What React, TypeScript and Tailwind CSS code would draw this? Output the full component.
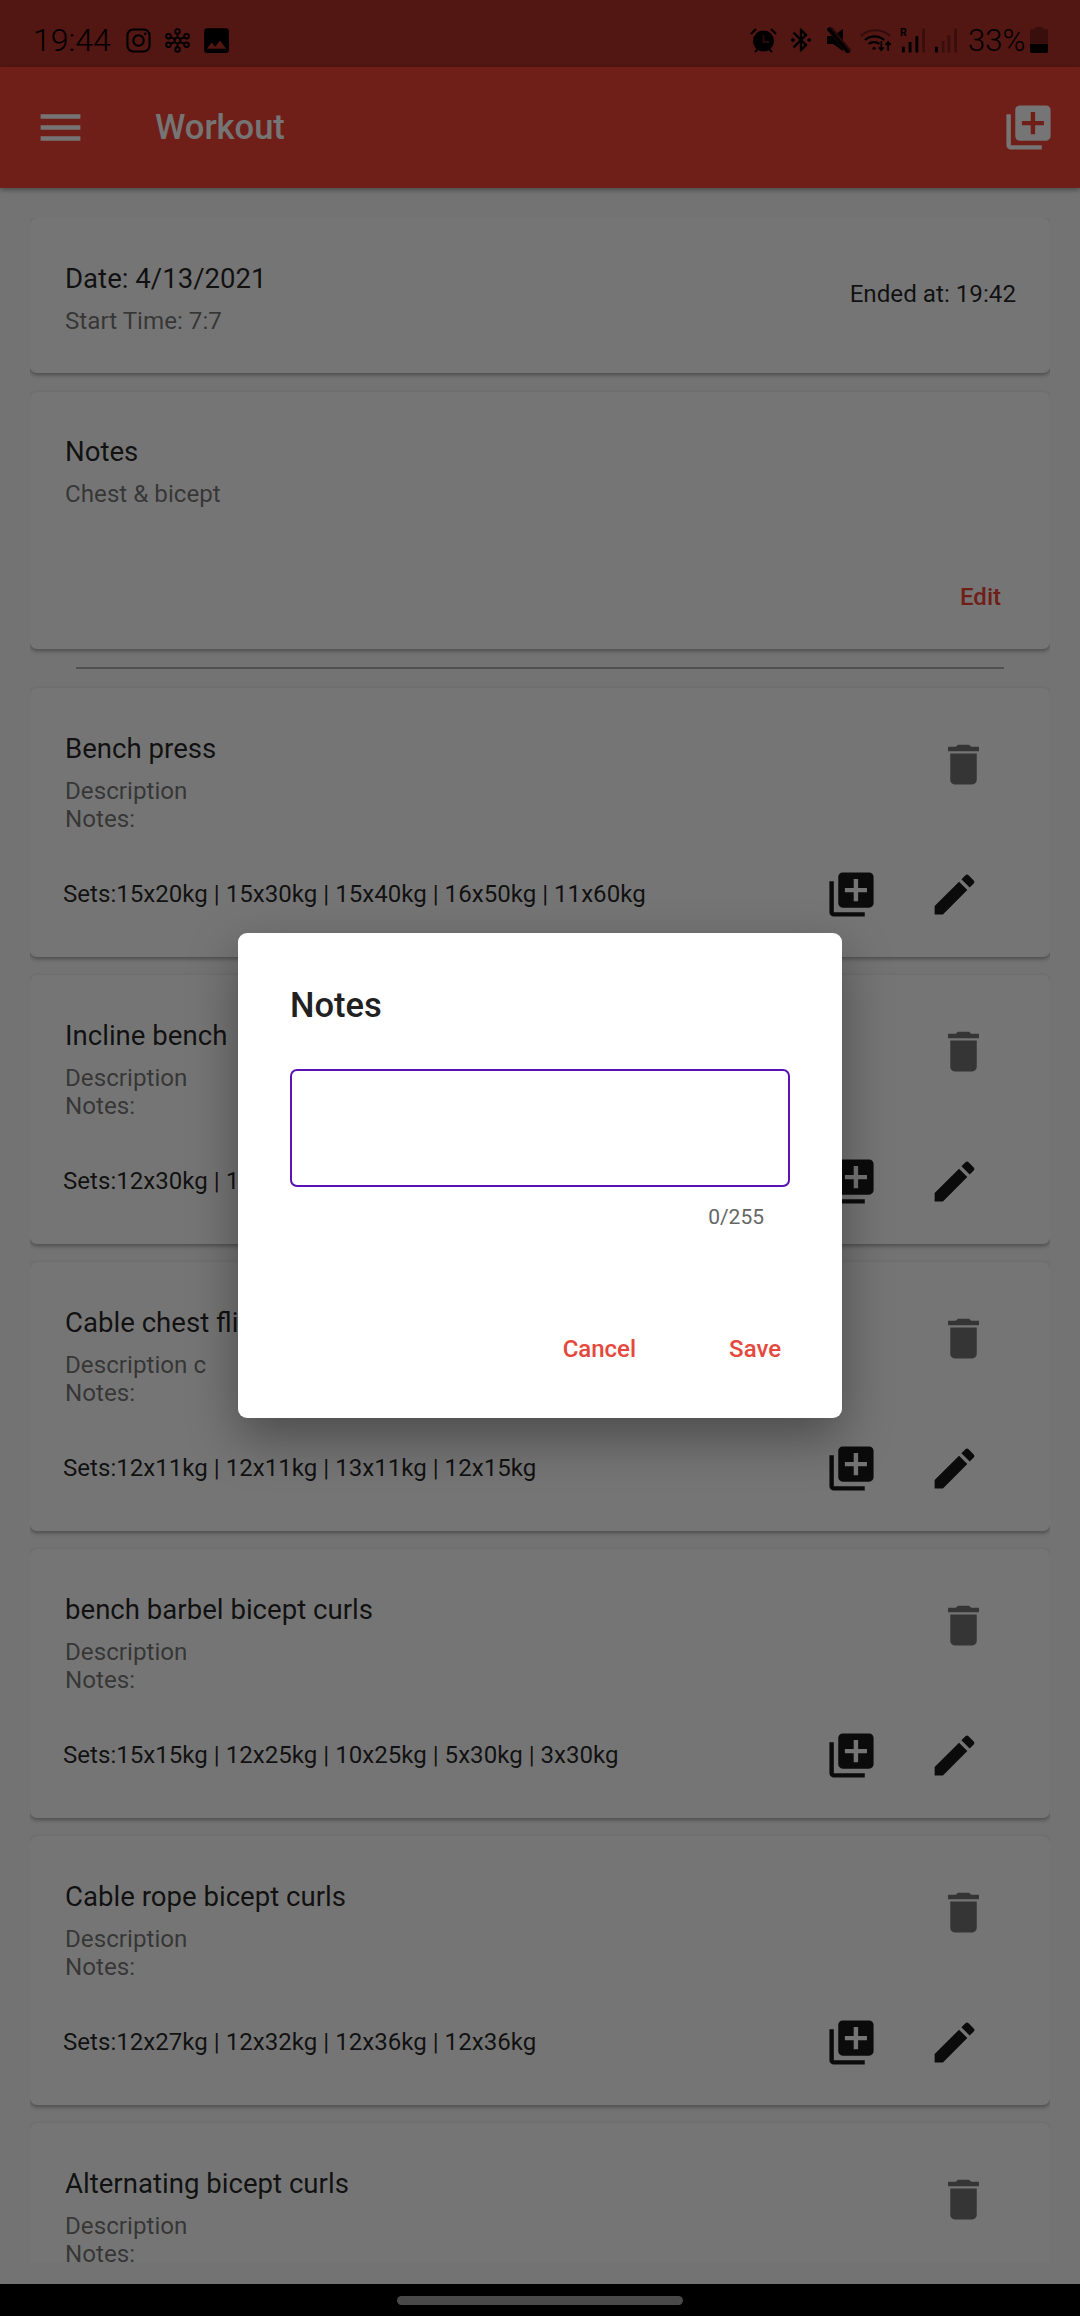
import { MdBluetoothConnected, MdDelete, MdEdit, MdImage, MdLibraryAdd, MdMenu } from "react-icons/md";

const exercises = [
  { name: "Bench press", description: "Description", sets: "Sets:15x20kg | 15x30kg | 15x40kg | 16x50kg | 11x60kg" },
  { name: "Incline bench", description: "Description", sets: "Sets:12x30kg | 12x40kg | 12x45kg | 12x50kg" },
  { name: "Cable chest flies", description: "Description c", sets: "Sets:12x11kg | 12x11kg | 13x11kg | 12x15kg" },
  { name: "bench barbel bicept curls", description: "Description", sets: "Sets:15x15kg | 12x25kg | 10x25kg | 5x30kg | 3x30kg" },
  { name: "Cable rope bicept curls", description: "Description", sets: "Sets:12x27kg | 12x32kg | 12x36kg | 12x36kg" },
  { name: "Alternating bicept curls", description: "Description", sets: "" },
];

function StatusBar() {
  return (
    <div className="h-[67px] shrink-0 bg-[#b2302b] flex items-center justify-between pl-[33px] pr-[32px] pt-[13px] text-black">
      <div className="flex items-center">
        <span className="w-[79px] text-[32px] leading-none font-light">19:44</span>
        <svg viewBox="0 0 26 26" className="w-[25px] h-[25px] ml-[14px]" fill="none" stroke="currentColor" strokeWidth="2.2">
          <rect x="1.500" y="1.500" width="23" height="23" rx="6" />
          <circle cx="13" cy="13" r="5.400" />
          <circle cx="20" cy="6" r="1" fill="currentColor" strokeWidth="0.8" />
        </svg>
        <svg viewBox="0 0 26 26" className="w-[25px] h-[25px] ml-[14px]" fill="none" stroke="currentColor" strokeWidth="2">
          <circle cx="13" cy="13" r="3" />
          <circle cx="13" cy="3.600" r="2.400" />
          <circle cx="13" cy="22.400" r="2.400" />
          <circle cx="3.600" cy="8.500" r="2.400" />
          <circle cx="22.400" cy="8.500" r="2.400" />
          <circle cx="3.600" cy="17.500" r="2.400" />
          <circle cx="22.400" cy="17.500" r="2.400" />
          <path d="M13 6v4M13 16v4M5.800 9.600l4.600 2M20.200 9.600l-4.600 2M5.800 16.400l4.600-2M20.200 16.400l-4.600-2" />
        </svg>
        <MdImage className="w-[33px] h-[33px] ml-[10px]" />
      </div>
      <div className="flex items-center">
        <svg viewBox="0 0 27 25" className="w-[27px] h-[25px]">
          <path d="M1 6l5-5M26 6l-5-5M5 24l3-3M22 24l-3-3" stroke="currentColor" strokeWidth="2" fill="none" />
          <circle cx="13.500" cy="13" r="10.500" fill="currentColor" />
          <path d="M13.500 7v7h6" stroke="#521614" strokeWidth="2" fill="none" />
        </svg>
        <MdBluetoothConnected className="w-[28px] h-[28px] ml-[10px]" />
        <svg viewBox="0 0 24 26" className="w-[24px] h-[26px] ml-[12px]">
          <path d="M0 9h6l10-7v22l-10-7H0z" fill="currentColor" />
          <path d="M2 1l20 24" stroke="#521614" strokeWidth="6" fill="none" />
          <path d="M1 1l21 25" stroke="currentColor" strokeWidth="3" fill="none" />
        </svg>
        <svg viewBox="0 0 34 26" className="w-[33px] h-[26px] ml-[9px]" fill="none" stroke="currentColor" strokeWidth="2.200">
          <path d="M1 9C9 1 23 1 31 9" opacity="0.4" />
          <path d="M5 13c6-5 14-5 20 0" />
          <path d="M9 17c3-2.500 8-2.500 11 0" />
          <circle cx="14.500" cy="21.500" r="1.600" fill="currentColor" stroke="none" />
          <path d="M22 14v9M19.500 20.500l2.500 3 2.500-3M29 24v-9M26.500 18l2.500-3 2.500 3" strokeWidth="1.800" />
        </svg>
        <svg viewBox="0 0 26 26" className="w-[25px] h-[26px] ml-[7px]" fill="currentColor">
          <text x="0" y="9" fontSize="11" fontWeight="700" fontFamily="Roboto, sans-serif">R</text>
          <rect x="2" y="20" width="3" height="6" />
          <rect x="9" y="15" width="3" height="11" />
          <rect x="16" y="9" width="3" height="17" />
          <rect x="23" y="1" width="3" height="25" opacity="0.3" />
        </svg>
        <svg viewBox="0 0 24 26" className="w-[23px] h-[26px] ml-[9px]" fill="currentColor">
          <rect x="1" y="20" width="3" height="6" />
          <rect x="8" y="14" width="3" height="12" opacity="0.3" />
          <rect x="14" y="8" width="3" height="18" opacity="0.3" />
          <rect x="21" y="1" width="3" height="25" opacity="0.3" />
        </svg>
        <span className="w-[57px] text-[31px] leading-none ml-[11px] font-light">33%</span>
        <svg viewBox="0 0 18 26" className="w-[18px] h-[26px] ml-[5px]" fill="currentColor">
          <path d="M5 0h8v2h3a2 2 0 0 1 2 2v20a2 2 0 0 1-2 2H2a2 2 0 0 1-2-2V4a2 2 0 0 1 2-2h3z" opacity="0.3" />
          <path d="M0 17h18v7a2 2 0 0 1-2 2H2a2 2 0 0 1-2-2z" />
        </svg>
      </div>
    </div>
  );
}

function ExerciseCard({ name, description, sets }: { name: string; description: string; sets: string }) {
  return (
    <div className="h-[269px] shrink-0 bg-white rounded-[7px] shadow-[0_2px_4px_rgba(0,0,0,0.35)] pl-[35px]">
      <div className="flex justify-between">
        <div className="pt-[44px]">
          <h3 className="text-[27.6px] leading-[33px] text-black/85">{name}</h3>
          <p className="mt-[12px] text-[24.200px] leading-[28px] text-black/55">
            {description}
            <br />
            Notes:
          </p>
        </div>
        <MdDelete className="w-[53px] h-[53px] mt-[50px] mr-[60px] text-black/55" />
      </div>
      <div className="flex items-center justify-between mt-[35px] -ml-[2px] pr-[69px] h-[53px]">
        <span className="text-[24.100px] text-black/85">{sets}</span>
        <div className="flex gap-[50px]">
          <MdLibraryAdd className="w-[53px] h-[53px] text-black/90" />
          <MdEdit className="w-[53px] h-[53px] text-black/90" />
        </div>
      </div>
    </div>
  );
}

export default function App() {
  return (
    <div className="relative w-[1080px] h-[2316px] overflow-hidden bg-[#fafafa] font-[Roboto,sans-serif] flex flex-col">
      <StatusBar />

      {/* App bar */}
      <header className="relative z-10 h-[121px] shrink-0 bg-[#f44336] flex items-center justify-between pl-[34px] pr-[25px] shadow-[0_2px_5px_rgba(0,0,0,0.35)] text-white">
        <div className="flex items-center">
          <MdMenu className="w-[53px] h-[53px]" />
          <h1 className="ml-[68px] text-[34.500px] font-medium">Workout</h1>
        </div>
        <MdLibraryAdd className="w-[53px] h-[53px]" />
      </header>

      {/* List */}
      <main className="flex-1 min-h-0 overflow-hidden px-[30px] flex flex-col">
        <div className="h-[30px] shrink-0" />
        <div className="flex-1 min-h-0 overflow-hidden flex flex-col">
          <div className="h-[155px] shrink-0 bg-white rounded-[7px] shadow-[0_2px_4px_rgba(0,0,0,0.35)] flex items-center justify-between pl-[35px] pr-[34px]">
            <div className="mt-[5px]">
              <p className="text-[27.6px] leading-[33px] text-black/85">Date: 4/13/2021</p>
              <p className="mt-[12px] text-[24.200px] leading-[28px] text-black/55">Start Time: 7:7</p>
            </div>
            <span className="mb-[2px] text-[24.200px] text-black/85">Ended at: 19:42</span>
          </div>

          <div className="h-[257px] shrink-0 mt-[19px] bg-white rounded-[7px] shadow-[0_2px_4px_rgba(0,0,0,0.35)] pl-[35px] pr-[49px] pt-[43px] flex flex-col">
            <p className="text-[27.6px] leading-[33px] text-black/85">Notes</p>
            <p className="mt-[12px] text-[24.200px] leading-[28px] text-black/55">Chest &amp; bicept</p>
            <button className="mt-[75px] self-end text-[24px] leading-[28px] font-medium text-[#f44336]">Edit</button>
          </div>

          <div className="h-[2px] shrink-0 mx-[46px] mt-[18px] bg-black/30" />

          <div className="mt-[19px] flex flex-col gap-[18px]">
            {exercises.map((exercise) => (
              <ExerciseCard key={exercise.name} {...exercise} />
            ))}
          </div>
        </div>
        <div className="h-[22px] shrink-0" />
      </main>

      {/* Navigation bar */}
      <div className="h-[32px] shrink-0 bg-black flex justify-center pt-[12px]">
        <div className="w-[286px] h-[9px] rounded-full bg-[#a0a0a0]" />
      </div>

      {/* Dialog */}
      <div className="absolute inset-0 z-20 bg-black/54 flex items-center justify-center pt-[34px]">
        <div className="w-[604px] h-[485px] bg-white rounded-[9px] shadow-[0_20px_50px_rgba(0,0,0,0.35)] px-[52px] pt-[50px] flex flex-col">
          <h2 className="text-[34.500px] leading-[44px] font-medium text-[#212121]">Notes</h2>
          <div className="mt-[42px] h-[118px] rounded-[7px] border-2 border-[#5a12b5]" />
          <p className="mt-[18px] pr-[26px] text-right text-[21px] leading-[24px] text-[#666]">0/255</p>
          <div className="mt-[106px] flex justify-end gap-[93px] pr-[9px] text-[24px] leading-[28px] font-medium text-[#e5483c]">
            <button>Cancel</button>
            <button>Save</button>
          </div>
        </div>
      </div>
    </div>
  );
}
